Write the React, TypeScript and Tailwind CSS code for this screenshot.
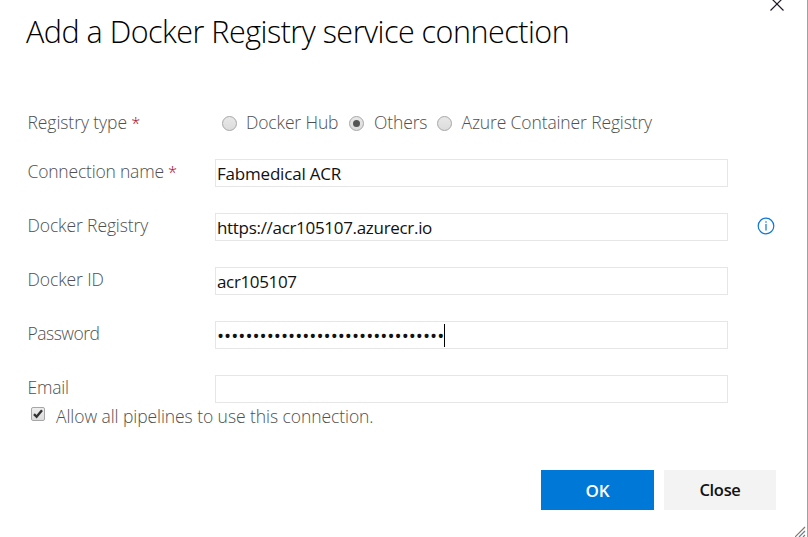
import type { ReactNode } from "react";

function Label({ children, required, tracking = "" }: { children: ReactNode; required?: boolean; tracking?: string }) {
  return (
    <div className={`w-[188px] shrink-0 pl-[0.5px] whitespace-nowrap text-[17.5px] leading-6 font-light text-[#505050] ${tracking}`}>
      {children}
      {required && <span className="text-[16.5px] font-light text-[#a80020]"> *</span>}
    </div>
  );
}

function Field({ label, required, children, info, tracking }: { label: string; required?: boolean; children?: ReactNode; info?: boolean; tracking?: string }) {
  return (
    <div className="flex h-7 items-start">
      <Label required={required} tracking={tracking}>{label}</Label>
      <div className="flex h-7 w-[513px] shrink-0 items-center border border-[#e6e6e6] pl-px pt-px text-[17px] text-[#111] whitespace-nowrap">
        {children}
      </div>
      {info && (
        <svg className="ml-[29px] mt-1 size-[18px] shrink-0" viewBox="0 0 18 18" fill="none" stroke="#0b78d4">
          <circle cx="9" cy="9" r="7.8" strokeWidth="1.2" />
          <path d="M9 7v6.5M9 4.2v1.5" strokeWidth="1.2" />
        </svg>
      )}
    </div>
  );
}

function Radio({ checked }: { checked?: boolean }) {
  return (
    <span className="flex size-[15px] shrink-0 items-center justify-center rounded-full border border-[#a6a6a6] bg-linear-to-b from-[#e8e8e8] to-[#dcdcdc]">
      {checked && <span className="size-[7px] rounded-full bg-[#555]" />}
    </span>
  );
}

export default function App() {
  return (
    <div className="relative h-[537px] w-[808px] overflow-hidden border-r border-[#a0a0a0] bg-white font-['Open_Sans','Noto_Sans',sans-serif]">
      <header className="flex h-[110px] items-start justify-between pl-[26px] pr-[23px]">
        <h1 className="pt-[9px] whitespace-nowrap text-[30.5px] leading-[44px] font-light text-black">
          <span className="tracking-[-0.5px]">Add a Docker Registry service connection</span>
        </h1>
        <svg className="-mt-[3px] size-[14px] shrink-0" viewBox="0 0 14 14" stroke="#211828" strokeWidth="1.2">
          <path d="M0.5 0.5l13 13M13.5 0.5l-13 13" />
        </svg>
      </header>

      <main className="pl-[27px]">
        <div className="flex h-[49px] items-start">
          <Label required tracking="tracking-[-0.07px]">Registry type</Label>
          <div className="flex h-[26px] items-center pl-[7px] whitespace-nowrap text-[17.5px] leading-6 font-light tracking-[-0.13px] text-[#505050]">
            <Radio />
            <span className="ml-[9px] w-[103px] pb-[2px]">Docker Hub</span>
            <Radio checked />
            <span className="ml-[10px] w-[63px] pb-[2px]">Others</span>
            <Radio />
            <span className="ml-[9.5px] pb-[2px]">Azure Container Registry</span>
          </div>
        </div>
        <div className="flex flex-col gap-[26px]">
          <Field label="Connection name" required tracking="tracking-[-0.2px]"><span className="tracking-[-0.2px]">Fabmedical ACR</span></Field>
          <Field label="Docker Registry" info tracking="tracking-[-0.11px]"><span className="tracking-[-0.31px]">https://acr105107.azurecr.io</span></Field>
          <Field label="Docker ID" tracking="tracking-[-0.1px]"><span className="tracking-[-0.35px]">acr105107</span></Field>
          <Field label="Password" tracking="tracking-[-0.5px]">
            <span className="text-[18.9px] leading-6">••••••••••••••••••••••••••••••••</span>
            <span className="-mt-px h-[23px] w-px bg-black" />
          </Field>
          <Field label="Email" tracking="tracking-[-0.2px]" />
        </div>
        <div className="flex items-start pl-[4px] pt-[2px]">
          <span className="mt-[2px] flex size-[14px] items-center justify-center rounded-[2px] border border-[#a6a6a6] bg-linear-to-b from-[#eee] to-[#dcdcdc]">
            <svg className="size-[10px]" viewBox="0 0 10 10" fill="none" stroke="#333" strokeWidth="2.4"><path d="M1 5.2l2.6 2.6L9 1.3" /></svg>
          </span>
          <span className="ml-[11px] whitespace-nowrap text-[17.5px] leading-6 font-light tracking-[-0.07px] text-[#505050]"><span className="relative -top-px">Allow all pipelines to use this connection.</span></span>
        </div>
      </main>

      <footer className="mt-[41px] flex justify-end gap-[10px] pr-[31px]">
        <button className="h-10 w-[113px] bg-[#0078d7] pt-px text-[17px] font-semibold text-white">OK</button>
        <button className="h-10 w-[112px] bg-[#f3f3f3] pt-px text-[16.5px] font-semibold tracking-[-0.3px] text-[#111]">Close</button>
      </footer>
      <svg className="absolute right-px bottom-0 size-[11px]" viewBox="0 0 11 11" strokeWidth="1.2" fill="none">
        <path d="M0 11L10 1M8 11l2-2" stroke="#8a7568" />
        <path d="M4 11l6-6" stroke="#5f8299" />
      </svg>
    </div>
  );
}
